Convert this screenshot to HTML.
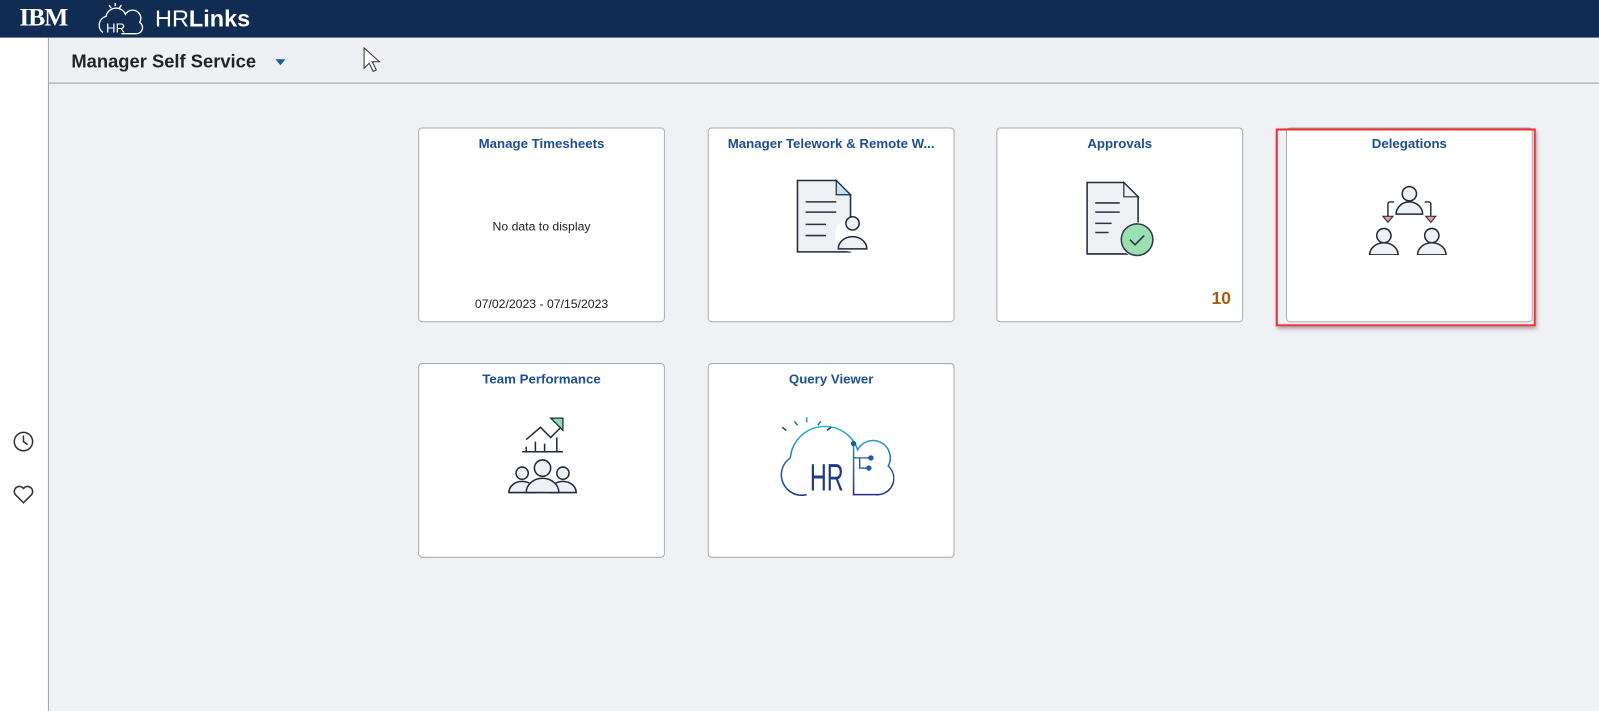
<!DOCTYPE html>
<html><head><meta charset="utf-8"><style>
body{margin:0;width:1599px;height:697px;overflow:hidden;background:#f0f1f4;font-family:"Liberation Sans",Arial,sans-serif;position:relative}
#w{position:absolute;left:0;top:0;width:1568px;height:684px;transform:scale(1.0198);transform-origin:0 0}
.hdr{position:absolute;left:0;top:0;width:1568px;height:37px;background:#112c52}
.side{position:absolute;left:0;top:37px;width:47px;height:660px;background:#fff;border-right:1px solid #a0a4aa}
.bar{position:absolute;left:48px;top:37px;width:1520px;height:44px;background:#eff0f4;border-bottom:1px solid #9a9ea4}
.bar span{position:absolute;left:22px;top:13px;font-size:18px;font-weight:bold;color:#1f2329}
.tile{position:absolute;width:240px;height:189px;background:#fff;border:1px solid #a9acb1;border-radius:4px}
.t{position:absolute;top:7px;left:0;width:100%;text-align:center;font-size:13px;font-weight:bold;color:#1d4f91;white-space:nowrap;overflow:hidden}
.c{position:absolute;width:100%;text-align:center;font-size:12px;color:#222}
</style></head><body><div id="w">
<div class="hdr">
<div style="position:absolute;left:19px;top:4px;color:#fff;font-size:25px;font-weight:bold;letter-spacing:-1px;font-family:'Liberation Serif',serif">IBM</div>
<svg style="position:absolute;left:93px;top:2px" width="50" height="33" viewBox="0 0 50 33"><g fill="none" stroke="#fff" stroke-width="1.3"><path d="M8 30 A9 9 0 0 1 11 14 A10 10 0 0 1 30 12 A8 8 0 0 1 44 20 A6 6 0 0 1 40 31 H26"/><path d="M14 3l2 3M20 1v3M26 3l-2 3"/></g><text x="11" y="30" fill="#fff" font-size="13" font-family="Liberation Sans">HR</text></svg>
<div style="position:absolute;left:152px;top:5px;color:#fff;font-size:23px">HR<b>Links</b></div>
</div>
<div class="side">
<svg style="position:absolute;left:12px;top:385px" width="22" height="22" viewBox="0 0 22 22"><circle cx="11" cy="11" r="9" fill="none" stroke="#333" stroke-width="1.5"/><path d="M11 5v6l4 3" fill="none" stroke="#333" stroke-width="1.5"/></svg>
<svg style="position:absolute;left:12px;top:438px" width="22" height="20" viewBox="0 0 22 20"><path d="M11 18 L3 10 A4.5 4.5 0 0 1 11 4 A4.5 4.5 0 0 1 19 10 Z" fill="none" stroke="#333" stroke-width="1.5"/></svg>
</div>
<div class="bar"><span>Manager Self Service</span>
<svg style="position:absolute;left:222px;top:21px" width="10" height="6"><path d="M0 0h10L5 6z" fill="#1d5ea8"/></svg>
<svg style="position:absolute;left:308px;top:9px" width="18" height="26" viewBox="0 0 18 26"><path d="M1 1v20l5-5 4 8 3-1.5-4-8h7z" fill="#fff" stroke="#333"/></svg>
</div>

<div class="tile" style="left:410px;top:125px"><div class="t">Manage Timesheets</div>
<div class="c" style="top:89px">No data to display</div><div class="c" style="top:165px">07/02/2023 - 07/15/2023</div></div>

<div class="tile" style="left:694px;top:125px"><div class="t">Manager Telework &amp; Remote W...</div>
<svg style="position:absolute;left:84px;top:49px" width="76" height="76" viewBox="0 0 76 76"><path d="M3 2h38l14 14v56H3z" fill="#f0f1f4" stroke="#1f2a3a" stroke-width="1.5"/><path d="M41 2v14h14z" fill="#bfe4f7" stroke="#1f2a3a" stroke-width="1.2"/><path d="M11 23h30M11 33h30M11 45h20M11 56h20" stroke="#2a3445" stroke-width="1.5"/><circle cx="57" cy="55" r="17" fill="#fff"/><circle cx="57" cy="44" r="6.5" fill="#f0f1f4" stroke="#1f2a3a" stroke-width="1.5"/><path d="M43 69a14 12 0 0 1 28 0z" fill="#f0f1f4" stroke="#1f2a3a" stroke-width="1.5"/></svg></div>

<div class="tile" style="left:977px;top:125px"><div class="t">Approvals</div>
<svg style="position:absolute;left:85px;top:51px" width="80" height="80" viewBox="0 0 80 80"><path d="M3 2h36l14 14v56H3z" fill="#f0f1f4" stroke="#1f2a3a" stroke-width="1.5"/><path d="M39 2v14h14z" fill="#f0f1f4" stroke="#1f2a3a" stroke-width="1.2"/><path d="M11 22h24M11 31h24M11 42h16M11 51h13" stroke="#2a3445" stroke-width="1.5"/><circle cx="52" cy="58" r="17" fill="#fff"/><circle cx="52" cy="58" r="15.5" fill="#9be0b3" stroke="#2d3a47" stroke-width="1.5"/><path d="M45 58l5 5 9-9" fill="none" stroke="#2d3a47" stroke-width="1.6"/></svg>
<div style="position:absolute;right:11px;top:157px;font-size:17px;font-weight:bold;color:#a45c0b">10</div></div>

<div class="tile" style="left:1261px;top:125px"><div class="t">Delegations</div>
<svg style="position:absolute;left:80px;top:52px" width="84" height="72" viewBox="0 0 84 72"><g fill="#f0f1f4" stroke="#1f2a3a" stroke-width="1.5"><circle cx="40" cy="12" r="7"/><path d="M27 32a13 12 0 0 1 26 0z"/><circle cx="15" cy="53" r="7"/><path d="M1 72a14 12 0 0 1 28 0z"/><circle cx="62" cy="53" r="7"/><path d="M48 72a14 12 0 0 1 28 0z"/></g><path d="M25 20h-4a2 2 0 0 0-2 2v12M55 20h4a2 2 0 0 1 2 2v12" fill="none" stroke="#1f2a3a" stroke-width="1.4"/><path d="M14 34h10l-5 6zM56 34h10l-5 6z" fill="#f19a9a" stroke="#1f2a3a" stroke-width="1"/></svg></div>

<div style="position:absolute;left:1251px;top:126px;width:251px;height:190px;border:2px solid #ef3236;box-shadow:1px 2px 4px rgba(0,0,0,.35)"></div>

<div class="tile" style="left:410px;top:356px"><div class="t">Team Performance</div>
<svg style="position:absolute;left:86px;top:50px" width="70" height="80" viewBox="0 0 70 80"><path d="M19 24l14-12 10 10 12-12" fill="none" stroke="#1f2a3a" stroke-width="1.5"/><path d="M43 3h12v12z" fill="#8ddbb0" stroke="#1f2a3a" stroke-width="1.2"/><path d="M15 36h40M19 36v-5M28 36v-10M37 36v-8M49 36v-14" stroke="#1f2a3a" stroke-width="1.5"/><g fill="#f0f1f4" stroke="#1f2a3a" stroke-width="1.5"><circle cx="15" cy="57" r="6"/><path d="M2 76a13 11 0 0 1 26 0z"/><circle cx="55" cy="57" r="6"/><path d="M42 76a13 11 0 0 1 26 0z"/><circle cx="35" cy="52" r="8"/><path d="M19 76a16 14 0 0 1 32 0z"/></g></svg></div>

<div class="tile" style="left:694px;top:356px"><div class="t">Query Viewer</div>
<svg style="position:absolute;left:62px;top:48px" width="120" height="86" viewBox="0 0 120 86"><defs><linearGradient id="g" x1="0" y1="0" x2="0" y2="1"><stop offset="0" stop-color="#2ab9c2"/><stop offset="1" stop-color="#1b2f8e"/></linearGradient></defs><g fill="none" stroke="url(#g)" stroke-width="1.5"><path d="M34 80 A20 20 0 0 1 18 44 M18 44 A34 34 0 0 1 84 36 A16 16 0 0 1 114 52 A16 16 0 0 1 102 80 H80 V30"/><path d="M22 8l3 4M34 4v5M48 8l-3 4M58 14l-4 3M10 14l4 3"/></g><text transform="scale(0.62,1)" x="60" y="76" font-size="37" fill="#1b3a8e" font-family="Liberation Sans">HR</text><g stroke="#1a5e9a" stroke-width="1.3" fill="#1a5e9a"><path d="M80 44h16M86 44v10h8" fill="none"/><circle cx="80" cy="30" r="2"/><circle cx="97" cy="44" r="2"/><circle cx="95" cy="54" r="2"/></g></svg></div>
</div></body></html>
